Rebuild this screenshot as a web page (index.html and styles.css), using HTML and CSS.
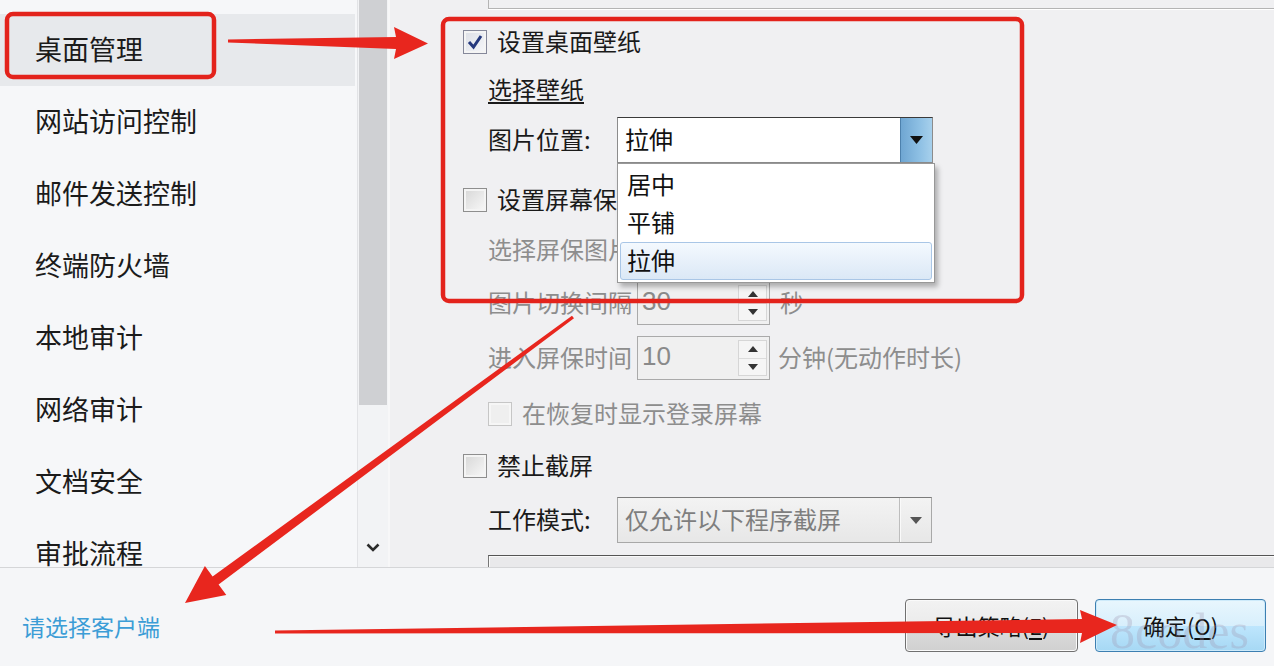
FILE: index.html
```html
<!DOCTYPE html>
<html lang="zh-CN">
<head>
    <meta charset="UTF-8">
    <meta name="viewport" content="width=device-width, initial-scale=1.0">
    <title>桌面管理</title>
    <link rel="stylesheet" href="styles.css">
</head>
<body>
    <div class="app">
        <div class="main">
            <!-- 左邊選單 -->
            <ul class="nav">
                <li class="active">桌面管理</li>
                <li>网站访问控制</li>
                <li>邮件发送控制</li>
                <li>终端防火墙</li>
                <li>本地审计</li>
                <li>网络审计</li>
                <li>文档安全</li>
                <li>审批流程</li>
            </ul>
            <div class="scrollbar">
                <div class="thumb"></div>
                <svg class="chev" width="14" height="9" viewBox="0 0 14 9"><path d="M1.5 1.5 L7 7 L12.5 1.5" stroke="#2b2b2b" stroke-width="2.6" fill="none"/></svg>
            </div>
            <!-- 右邊設定 -->
            <div class="panel">
                <div class="group-top"></div>
                <div class="opts">
                    <div class="row">
                        <span class="cb checked"><svg width="22" height="22" viewBox="0 0 22 22"><path d="M5 11 L9.5 16 L17 5" stroke="#25397d" stroke-width="3" fill="none"/></svg></span>
                        <span>设置桌面壁纸</span>
                    </div>
                    <div class="row sub m12"><span class="under">选择壁纸</span></div>
                    <div class="row sub combo-row m9">
                        <span class="lbl">图片位置:</span>
                        <div class="combo">
                            <span class="val">拉伸</span>
                            <span class="combo-btn"><svg width="13" height="8" viewBox="0 0 13 8"><path d="M0 0 H13 L6.5 8 Z" fill="#111"/></svg></span>
                            <ul class="droplist">
                                <li>居中</li>
                                <li>平铺</li>
                                <li class="hot">拉伸</li>
                            </ul>
                        </div>
                    </div>
                    <div class="row m19"><span class="cb"></span><span>设置屏幕保护</span></div>
                    <div class="row sub off m14"><span>选择屏保图片</span></div>
                    <div class="row sub off spin-row m13">
                        <span class="spin-lbl">图片切换间隔</span>
                        <div class="spin">
                            <span class="num">30</span>
                            <span class="arrows">
                                <span><svg width="10" height="6" viewBox="0 0 10 6"><path d="M0 6 L5 0 L10 6 Z" fill="#333"/></svg></span>
                                <span><svg width="10" height="6" viewBox="0 0 10 6"><path d="M0 0 L5 6 L10 0 Z" fill="#333"/></svg></span>
                            </span>
                        </div>
                        <span class="unit">秒</span>
                    </div>
                    <div class="row sub off spin-row m11">
                        <span class="spin-lbl">进入屏保时间</span>
                        <div class="spin">
                            <span class="num">10</span>
                            <span class="arrows">
                                <span><svg width="10" height="6" viewBox="0 0 10 6"><path d="M0 6 L5 0 L10 6 Z" fill="#333"/></svg></span>
                                <span><svg width="10" height="6" viewBox="0 0 10 6"><path d="M0 0 L5 6 L10 0 Z" fill="#333"/></svg></span>
                            </span>
                        </div>
                        <span class="unit unit2">分钟(无动作时长)</span>
                    </div>
                    <div class="row sub off m16"><span class="cb dis"></span><span>在恢复时显示登录屏幕</span></div>
                    <div class="row m16"><span class="cb"></span><span>禁止截屏</span></div>
                    <div class="row sub combo-row m13">
                        <span class="lbl">工作模式:</span>
                        <div class="combo off">
                            <span class="val">仅允许以下程序截屏</span>
                            <span class="combo-btn"><svg width="12" height="7" viewBox="0 0 12 7"><path d="M0 0 H12 L6 7 Z" fill="#555"/></svg></span>
                        </div>
                    </div>
                </div>
                <div class="group-bottom"></div>
            </div>
        </div>
        <!-- 下方按鈕 -->
        <div class="footer">
            <a class="client">请选择客户端</a>
            <div class="btns">
                <button class="btn">导出策略(<u>E</u>)</button>
                <button class="btn primary">确定(<u>O</u>)</button>
            </div>
        </div>
        <span class="watermark">8codes</span>
        <!-- 紅色標註 -->
        <svg class="marks" width="1274" height="666" viewBox="0 0 1274 666">
            <rect x="7" y="14" width="207" height="63" rx="6" fill="none" stroke="#e3231c" stroke-width="4.5"/>
            <rect x="443" y="19" width="579" height="282" rx="6" fill="none" stroke="#e3231c" stroke-width="4.5"/>
            <polygon points="228,39.5 396,37 394,27 428,43.5 394,59 396,49 228,42.5" fill="#e8261e"/>
            <polygon points="572,315.8 212.6,576.5 204.9,566 185,603 226.3,595 218.6,584.5 574,318.2" fill="#e8261e"/>
            <polygon points="275,630.5 1082,619 1080,610 1117,625 1080,643 1082,633 275,633.5" fill="#e8261e"/>
        </svg>
    </div>
</body>
</html>
```

FILE: styles.css
```css
/* 整個視窗 */
body{
    margin: 0;
    font-family: "Noto Sans CJK SC", "Noto Sans", sans-serif;
}
.app{
    position: relative;
    width: 1274px;
    height: 666px;
    overflow: hidden;
    display: flex;
    flex-direction: column;
    background: #f0f0f2;
}
.main{
    display: flex;
    height: 567px;
}
/* 左邊選單 */
.nav{
    list-style: none;
    margin: 0;
    padding: 14px 0 0;
    width: 357px;
    background: #f6f7f9;
    overflow: hidden;
}
.nav li{
    height: 72px;
    width: 355px;
    display: flex;
    align-items: center;
    padding: 0 0 4px 35px;
    box-sizing: border-box;
    font-size: 27px;
    color: #1b1b1b;
}
.nav li.active{background: #e7e9ec;}
/* 捲軸 */
.scrollbar{
    width: 31px;
    display: flex;
    flex-direction: column;
    background: #f2f3f5;
    border-left: 1px solid #e2e3e6;
    box-sizing: border-box;
}
.thumb{
    height: 405px;
    margin: 0 1px 0 1px;
    background: #cfd0d3;
}
.chev{
    margin: auto auto 15px;
}
/* 右邊設定區 */
.panel{
    flex: 1;
    display: flex;
    flex-direction: column;
    overflow: hidden;
    background: #f0f0f2;
    border-left: 2px solid #f7f7f8;
}
.group-top{
    height: 8px;
    margin-left: 98px;
    border-left: 1px solid #b4b4b4;
    border-bottom: 1px solid #b4b4b4;
    box-shadow: 0 1px 0 #fff;
}
.opts{
    padding: 15px 0 0 73px;
}
.row{
    display: flex;
    align-items: center;
    height: 36px;
    font-size: 24px;
    color: #1a1a1a;
    white-space: nowrap;
}
.row > span:not(.cb){padding-bottom: 3px;}
.sub{padding-left: 25px;}
.off{color: #8d8d8d;}
.m9{margin-top: 9px;}
.m11{margin-top: 11px;}
.m12{margin-top: 12px;}
.m13{margin-top: 13px;}
.m14{margin-top: 14px;}
.m16{margin-top: 16px;}
.m19{margin-top: 19px;}
.under{text-decoration: underline; text-underline-offset: 3px;}
/* 勾選框 */
.cb{
    width: 24px;
    height: 24px;
    margin-right: 10px;
    box-sizing: border-box;
    border: 1px solid #8e8e8e;
    background: linear-gradient(135deg, #d6d6d6, #f9f9f9);
    box-shadow: inset 0 0 0 2px #f4f4f4;
    display: flex;
    align-items: center;
    justify-content: center;
}
.cb.checked{
    background: linear-gradient(135deg, #dcdfe6, #f6f7fa);
    border-color: #85889a;
}
.cb.dis{
    border-color: #c6c6c6;
    background: #efefef;
    box-shadow: inset 0 0 0 2px #f6f6f6;
}
/* 下拉選單 */
.combo-row{height: 46px;}
.lbl{width: 129px;}
.combo{
    position: relative;
    z-index: 5;
    width: 316px;
    height: 46px;
    box-sizing: border-box;
    display: flex;
    align-items: center;
    background: #fff;
    border: 1px solid #8c8c8c;
    border-top-color: #3a3a3a;
}
.combo .val{
    flex: 1;
    padding: 0 0 3px 7px;
    color: #111;
}
.combo-btn{
    width: 31px;
    align-self: stretch;
    display: flex;
    align-items: center;
    justify-content: center;
    background: linear-gradient(90deg, #6fa6d2, #8ec0e4 60%, #a7d0ec);
    border-left: 1px solid #4d81ad;
}
.combo.off{
    width: 315px;
    background: linear-gradient(#f3f3f3, #e7e7e7);
    border-color: #a8a8a8;
    border-top-color: #7c7c7c;
}
.combo.off .val{color: #7e7e7e;}
.combo.off .combo-btn{
    background: transparent;
    border-left: 1px solid #bdbdbd;
    box-shadow: inset 1px 0 0 #fafafa;
}
.droplist{
    position: absolute;
    left: -1px;
    top: 45px;
    width: 318px;
    margin: 0;
    padding: 2px;
    list-style: none;
    box-sizing: border-box;
    background: #fff;
    border: 1px solid #989898;
    box-shadow: 3px 4px 5px rgba(0,0,0,.28);
}
.droplist li{
    height: 38px;
    display: flex;
    align-items: center;
    padding: 0 0 3px 7px;
    box-sizing: border-box;
    color: #111;
}
.droplist li.hot{
    background: linear-gradient(#f4f9fe, #dbe8f6);
    border: 1px solid #a9c6e6;
    border-radius: 3px;
    padding-left: 6px;
}
/* 數字框 */
.spin-row{height: 44px;}
.spin-lbl{width: 149px;}
.spin{
    width: 133px;
    height: 44px;
    box-sizing: border-box;
    display: flex;
    border: 1px solid #aaaaaa;
    background: #f0f0f0;
}
.spin .num{
    flex: 1;
    display: flex;
    align-items: center;
    padding: 0 0 3px 4px;
    font-family: "Liberation Sans", Arial, sans-serif;
    font-size: 26px;
    color: #8a8a8a;
}
.arrows{
    width: 27px;
    margin: 3px 2px 3px 0;
    display: flex;
    flex-direction: column;
    border: 1px solid #d6d6d6;
    background: #f5f5f5;
}
.arrows span{
    flex: 1;
    display: flex;
    align-items: center;
    justify-content: center;
}
.arrows span + span{border-top: 1px solid #dcdcdc;}
.unit{margin-left: 10px;}
.unit2{margin-left: 8px;}
.group-bottom{
    flex: 1;
    margin: 12px 0 0 98px;
    border-top: 1px solid #555;
    border-left: 1px solid #777;
    background: #e9e9eb;
    box-shadow: inset 1px 1px 0 #fafafa;
}
/* 下方 */
.footer{
    flex: 1;
    display: flex;
    align-items: flex-end;
    justify-content: space-between;
    padding: 0 8px 14px 22px;
    border-top: 1px solid #d5d6d8;
    background: #f5f6f8;
}
.client{
    margin-bottom: 14px;
    font-size: 23px;
    line-height: 24px;
    color: #3c9dd6;
}
.btns{
    display: flex;
    gap: 17px;
}
.btn{
    width: 173px;
    height: 53px;
    padding-bottom: 3px;
    font-family: "Noto Sans CJK SC", sans-serif;
    font-size: 22px;
    color: #111;
    border: 1px solid #707070;
    border-radius: 4px;
    background: linear-gradient(#f2f2f2, #ebebeb 50%, #dddddd 51%, #d0d0d0);
    box-shadow: inset 0 0 0 1px #fafafa;
}
.btn.primary{
    width: 171px;
    border-color: #3c7fb1;
    background: linear-gradient(#e8f6fd, #d8effc 50%, #bee6fd 51%, #a6d8f4);
    box-shadow: inset 0 0 0 1px #cdeafa;
}
.btn u{text-underline-offset: 3px;}
.watermark{
    position: absolute;
    left: 1110px;
    top: 606px;
    font-family: "Liberation Serif", serif;
    font-size: 50px;
    line-height: 1;
    color: rgba(160,150,175,.3);
}
/* 紅色標註 */
.marks{
    position: absolute;
    left: 0;
    top: 0;
    pointer-events: none;
}
```
